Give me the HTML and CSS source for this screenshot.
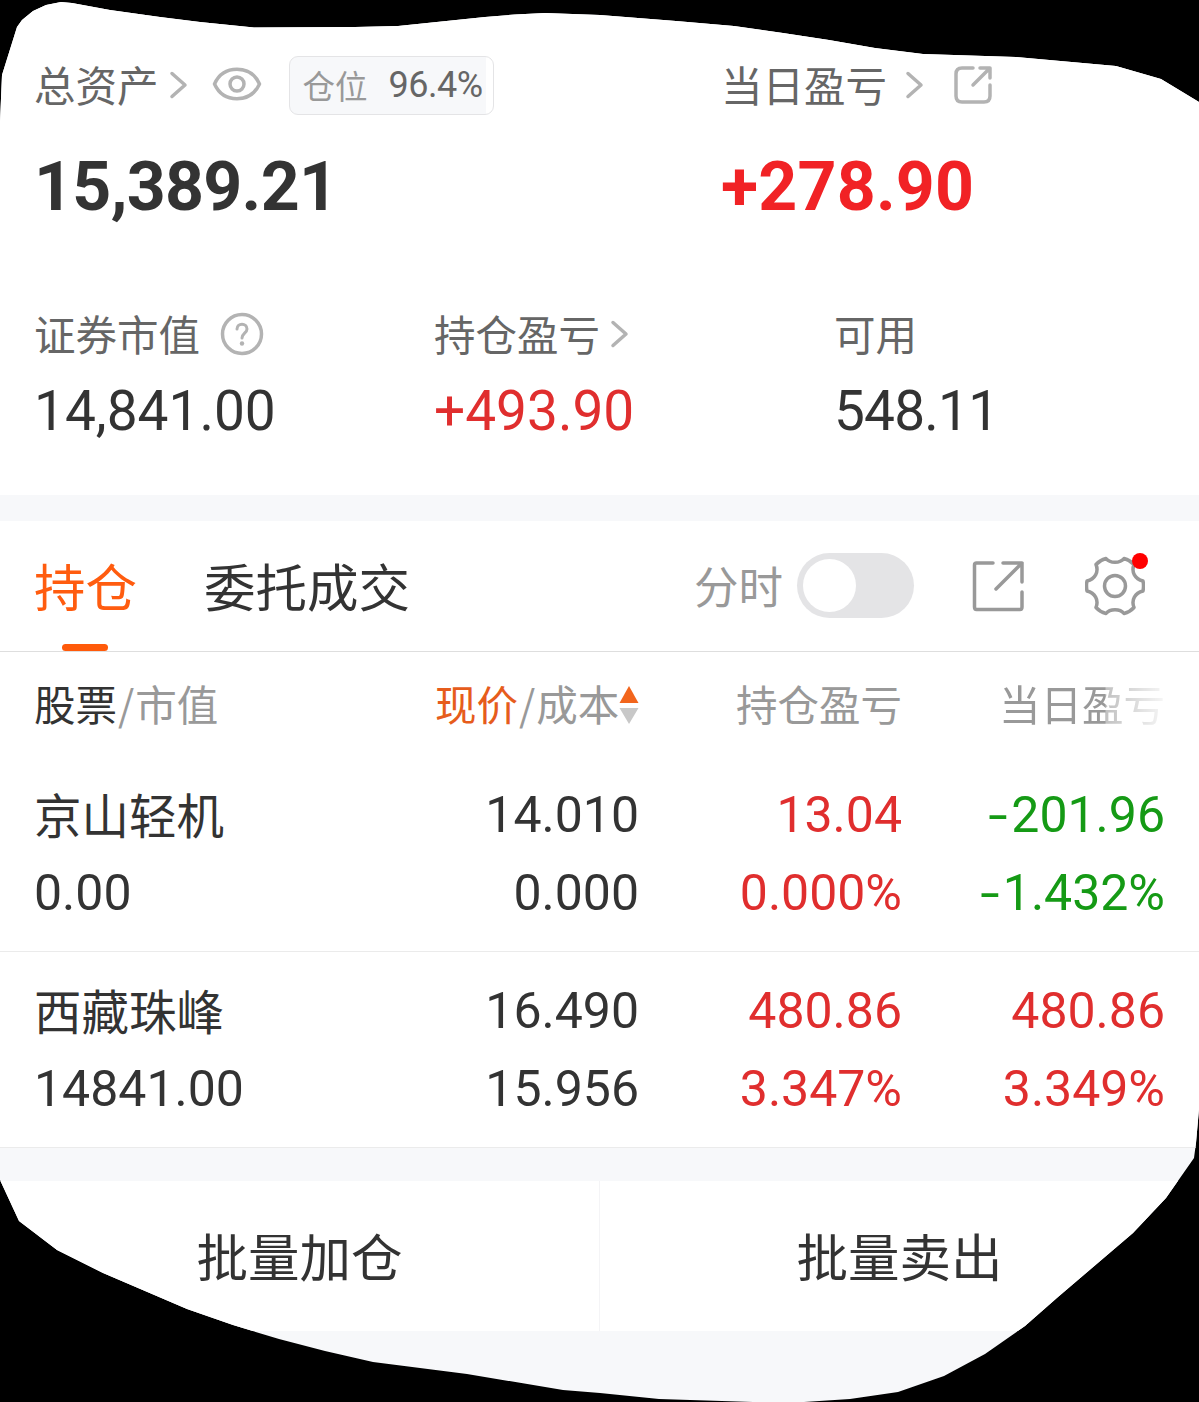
FILE: index.html
```
<!DOCTYPE html>
<html lang="zh-CN">
<head>
    <meta charset="UTF-8">
    <meta name="viewport" content="width=device-width, initial-scale=1.0">
    <title>持仓</title>
    <link rel="stylesheet" href="styles.css">
</head>
<body>
    <div class="page">
        <section class="summary">
            <div class="totals">
                <div class="total">
                    <div class="label">
                        <span>总资产</span>
                        <svg class="arrow" width="20" height="30" viewBox="0 0 20 30"><path d="M3 3.500L16 15L3 26.500"/></svg>
                        <svg class="eye" width="50" height="36" viewBox="0 0 50 36"><path d="M2.500 18C7 8 15 3.300 25 3.300S43 8 47.500 18C43 28 35 32.700 25 32.700S7 28 2.500 18Z"/><circle cx="25" cy="18" r="7"/></svg>
                        <span class="pill"><span>仓位</span><span class="num">96.4%</span></span>
                    </div>
                    <div class="big num">15,389.21</div>
                </div>
                <div class="total">
                    <div class="label">
                        <span>当日盈亏</span>
                        <svg class="arrow wide" width="20" height="30" viewBox="0 0 20 30"><path d="M3 3.500L16 15L3 26.500"/></svg>
                        <svg class="share" width="40" height="40" viewBox="0 0 40 40"><path d="M20 3H9Q3 3 3 9V31Q3 37 9 37H31Q37 37 37 31V20"/><path d="M27 3H37V13M37 3L20 20"/></svg>
                    </div>
                    <div class="big num bright">+278.90</div>
                </div>
            </div>
            <div class="stats">
                <div>
                    <div class="label">
                        <span>证券市值</span>
                        <svg class="help" width="44" height="44" viewBox="0 0 44 44"><circle cx="22" cy="22" r="19.500"/><path d="M17 17C17 10.500 27 10.500 27 17C27 21 22 21.500 22 26"/><circle class="dot" cx="22" cy="31.500" r="2.200"/></svg>
                    </div>
                    <div class="mid num">14,841.00</div>
                </div>
                <div>
                    <div class="label">
                        <span>持仓盈亏</span>
                        <svg class="arrow" width="20" height="30" viewBox="0 0 20 30"><path d="M3 3.500L16 15L3 26.500"/></svg>
                    </div>
                    <div class="mid num red">+493.90</div>
                </div>
                <div>
                    <div class="label"><span>可用</span></div>
                    <div class="mid num tight">548.11</div>
                </div>
            </div>
        </section>

        <nav class="tabs">
            <span class="tab active">持仓</span>
            <span class="tab">委托成交</span>
            <span class="switch-label">分时</span>
            <span class="switch"></span>
            <svg class="open" width="54" height="52" viewBox="0 0 54 52"><path d="M22 3H5.500Q3.500 3 3.500 5V47Q3.500 49.500 5.500 49.500H49Q51 49.500 51 47V32"/><path d="M32 3H51V22M51 3L25 29"/></svg>
            <span class="settings">
                <svg width="60" height="60" viewBox="0 0 60 60"><path d="M21 2.500C25 7.500 35 7.500 39 2.500Q45 4 49 8.500C46 16 50 23 58 25Q59 30 58 35C50 37 46 44 49 51.500Q45 56 39 57.500C35 52.500 25 52.500 21 57.500Q15 56 11 51.500C14 44 10 37 2 35Q1 30 2 25C10 23 14 16 11 8.500Q15 4 21 2.500Z"/><circle cx="30" cy="30" r="10.500"/></svg>
            </span>
        </nav>

        <div class="table">
            <div class="row head">
                <span><b>股票</b><em>/</em>市值</span>
                <span class="price"><b class="orange">现价</b><em>/</em>成本<svg class="sort" width="20" height="38" viewBox="0 0 20 38"><path class="up" d="M10 0L19.500 17H0.500Z"/><path class="down" d="M10 38L19.500 22H0.500Z"/></svg></span>
                <span class="right">持仓盈亏</span>
                <span class="right"><span class="fade">当日盈亏</span></span>
            </div>
            <div class="row">
                <div><p class="name">京山轻机</p><p class="num">0.00</p></div>
                <div class="right num"><p>14.010</p><p>0.000</p></div>
                <div class="right num red"><p>13.04</p><p>0.000%</p></div>
                <div class="right num green"><p><i>-</i>201.96</p><p><i>-</i>1.432%</p></div>
            </div>
            <div class="row">
                <div><p class="name">西藏珠峰</p><p class="num">14841.00</p></div>
                <div class="right num"><p>16.490</p><p>15.956</p></div>
                <div class="right num red"><p>480.86</p><p>3.347%</p></div>
                <div class="right num red"><p>480.86</p><p>3.349%</p></div>
            </div>
        </div>

        <div class="actions">
            <span>批量加仓</span>
            <span>批量卖出</span>
        </div>
    </div>
</body>
</html>
```
FILE: styles.css
```
* {
    box-sizing: border-box;
}
body {
    margin: 0;
    background: #000;
    color: #333;
    font-family: "Noto Sans CJK SC", sans-serif;
}
p {
    margin: 0;
}
b {
    font-weight: normal;
    color: #333;
}
svg {
    display: block;
    flex: none;
    fill: none;
    stroke: #b3b3b3;
    stroke-width: 3.5;
    stroke-linecap: round;
    stroke-linejoin: round;
}
/* wavy outline of the sheet, black shows around it */
.page {
    width: 1199px;
    height: 1402px;
    overflow: hidden;
    background: #f7f8fa;
    clip-path: polygon(0 122px, 2px 75px, 17px 27px, 22px 20px, 33px 11px, 46px 5px, 61px 2px, 72px 3px, 110px 10px, 160px 17px, 200px 22px, 254px 27.500px, 355px 27px, 398px 26px, 485px 17px, 515px 14.500px, 545px 13px, 600px 15px, 638px 18px, 676px 21px, 734px 26px, 783px 33px, 829px 40px, 875px 48px, 923px 54px, 1016px 57px, 1116px 66px, 1161px 79px, 1199px 102px, 1199px 1109px, 1196px 1143px, 1194px 1158px, 1166px 1198px, 1133px 1233px, 1058px 1297px, 1025px 1326px, 985px 1354px, 944px 1376px, 898px 1392px, 850px 1399px, 804px 1402px, 753px 1402px, 659px 1399px, 600px 1393px, 563px 1390px, 467px 1374px, 373px 1362px, 325px 1351px, 279px 1339px, 233px 1325px, 187px 1309px, 103px 1273px, 57px 1250px, 19px 1221px, 0 1180px);
}
.num {
    font-family: Roboto, sans-serif;
}
.red {
    color: #e02e2e;
}
.green {
    color: #159a15;
}

.summary {
    height: 495px;
    padding: 56px 0 0 34px;
    background: #fff;
}
.totals {
    display: grid;
    grid-template-columns: 687px 1fr;
}
.label {
    display: flex;
    align-items: center;
    height: 58px;
    font-size: 41.5px;
    line-height: 56px;
    color: #666;
}
.label > span:first-child {
    height: 58px;
}
.arrow {
    margin-left: 10px;
}
.wide {
    margin-left: 18px;
}
.eye {
    margin-left: 23px;
    margin-top: -2px;
}
.share {
    margin-left: 28px;
}
.help {
    margin-left: 20px;
}
.help path {
    stroke-width: 3;
}
.help .dot {
    fill: #b3b3b3;
    stroke: none;
}
.pill {
    display: flex;
    align-items: center;
    justify-content: space-between;
    width: 205px;
    height: 59px;
    margin-left: 27px;
    padding: 0 10px 0 13px;
    border: 1px solid #e4e4e6;
    border-radius: 9px;
    background: linear-gradient(to right, #f7f8fa 196px, #fff 196px);
    font-size: 32.5px;
    color: #999;
}
.pill .num {
    font-size: 36px;
    letter-spacing: -0.5px;
    color: #666;
}
.big {
    margin-top: 33px;
    font-size: 68px;
    font-weight: bold;
    line-height: 80px;
    letter-spacing: -0.7px;
}
.bright {
    color: #f12225;
    letter-spacing: 0.2px;
}
.stats {
    display: grid;
    grid-template-columns: repeat(3, 400px);
    margin-top: 78px;
}
.mid {
    margin-top: 15px;
    font-size: 55px;
    line-height: 66px;
}
.tight {
    letter-spacing: -0.8px;
}

.tabs {
    display: flex;
    align-items: center;
    height: 131px;
    margin-top: 26px;
    padding-left: 34px;
    border-bottom: 1px solid #dedede;
    background: #fff;
    font-size: 51.5px;
}
.tab {
    position: relative;
    height: 130px;
    margin-right: 67px;
    line-height: 127px;
}
.active {
    color: #ff5c0f;
}
.active::after {
    content: "";
    position: absolute;
    left: 28px;
    bottom: 0;
    width: 46px;
    height: 7px;
    border-radius: 4px;
    background: #ff5a0a;
}
.switch-label {
    height: 130px;
    margin-left: 217px;
    font-size: 44.5px;
    line-height: 127px;
    color: #999;
}
.switch {
    width: 117px;
    height: 65px;
    margin-left: 14px;
    margin-top: -2px;
    padding: 6px;
    border-radius: 33px;
    background: #e4e4e6;
}
.switch::before {
    content: "";
    display: block;
    width: 53px;
    height: 53px;
    border-radius: 50%;
    background: #fff;
}
.tabs svg {
    stroke: #999;
}
.open {
    margin-left: 57px;
}
.settings {
    position: relative;
    margin-left: 60px;
}
.settings::after {
    content: "";
    position: absolute;
    top: -3px;
    right: -3px;
    width: 16px;
    height: 16px;
    border-radius: 50%;
    background: #f00;
}

.table {
    background: #fff;
}
.row {
    display: grid;
    grid-template-columns: 401px 204px 263px 263px;
    height: 196px;
    padding: 20px 34px 0;
    border-bottom: 1px solid #ebebeb;
    font-size: 50px;
    line-height: 79px;
    white-space: nowrap;
}
.row p {
    height: 78px;
}
.row i {
    display: inline-block;
    font-style: normal;
    transform: scaleX(1.4);
    margin-right: 6px;
}
.row .name {
    font-size: 47.5px;
    line-height: 76px;
}
.right {
    text-align: right;
}
.head {
    height: 104px;
    padding-top: 12px;
    border-bottom: none;
    font-size: 41.5px;
    line-height: 78px;
    color: #999;
}
.head em {
    margin: 0 1px;
    font-style: normal;
}
.head .orange {
    color: #e65c1c;
}
.price {
    display: flex;
    align-items: center;
    height: 78px;
}
.sort {
    margin-top: 3px;
    stroke: none;
}
.sort .up {
    fill: #f2651c;
}
.sort .down {
    fill: #c8c8c8;
}
.fade {
    display: inline-block;
    -webkit-mask-image: linear-gradient(to right, #000 106px, rgba(0, 0, 0, 0.6) 107px, rgba(0, 0, 0, 0.08) 166px);
    mask-image: linear-gradient(to right, #000 106px, rgba(0, 0, 0, 0.6) 107px, rgba(0, 0, 0, 0.08) 166px);
}

.actions {
    display: flex;
    height: 150px;
    margin-top: 33px;
    background: #fff;
    font-size: 51.5px;
    line-height: 147px;
    text-align: center;
}
.actions span {
    flex: 1;
}
.actions span + span {
    border-left: 1px solid #f4f4f6;
}
```
